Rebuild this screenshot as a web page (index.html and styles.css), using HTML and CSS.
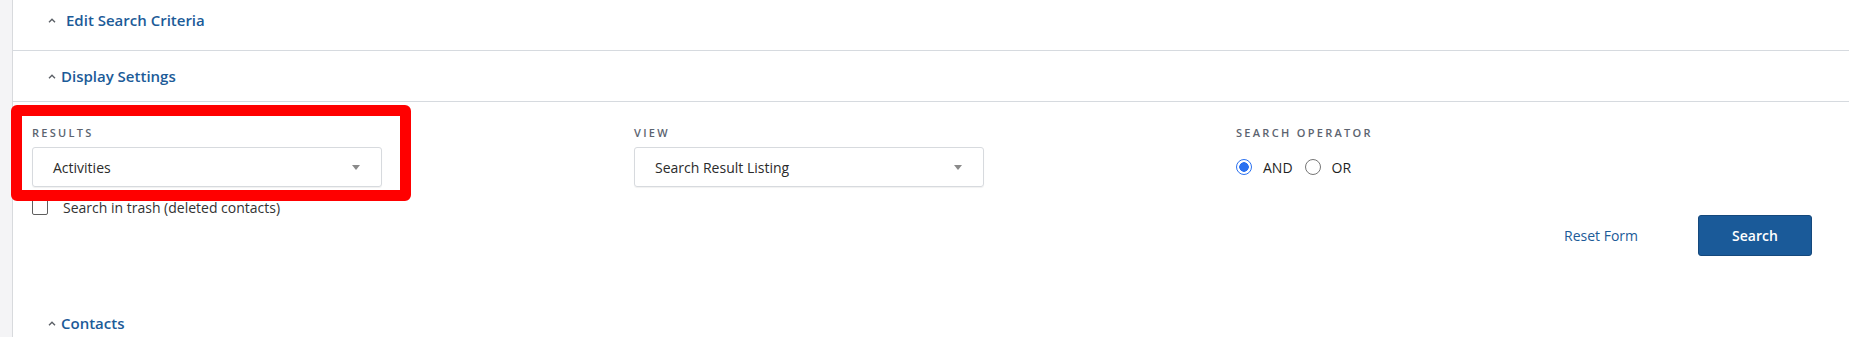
FILE: index.html
```html
<!DOCTYPE html>
<html lang="en">
<head>
    <meta charset="UTF-8">
    <title>Advanced Search</title>
    <link rel="stylesheet" href="styles.css">
</head>
<body>
    <div class="page">
        <div class="panel">
            <div class="section-head first">
                <svg class="caret" width="8" height="5" viewBox="0 0 8 5"><path d="M1 4.2 L4 1.2 L7 4.2" fill="none" stroke="#5a5f66" stroke-width="1.4"/></svg>
                <a class="section-title wide" href="#">Edit Search Criteria</a>
            </div>
            <div class="section-head">
                <svg class="caret" width="8" height="5" viewBox="0 0 8 5"><path d="M1 4.2 L4 1.2 L7 4.2" fill="none" stroke="#5a5f66" stroke-width="1.4"/></svg>
                <a class="section-title" href="#">Display Settings</a>
            </div>

            <div class="display-body">
                <div class="highlight"></div>
                <div class="fields">
                    <div class="field">
                        <label class="field-label">Results</label>
                        <div class="select">
                            <span>Activities</span>
                            <span class="arrow"></span>
                        </div>
                        <label class="check-row">
                            <input type="checkbox" class="check">
                            <span>Search in trash (deleted contacts)</span>
                        </label>
                    </div>
                    <div class="field">
                        <label class="field-label">View</label>
                        <div class="select">
                            <span>Search Result Listing</span>
                            <span class="arrow"></span>
                        </div>
                    </div>
                    <div class="field">
                        <label class="field-label">Search Operator</label>
                        <div class="radios">
                            <label class="radio-opt"><input type="radio" name="op" checked><span>AND</span></label>
                            <label class="radio-opt"><input type="radio" name="op"><span>OR</span></label>
                        </div>
                    </div>
                </div>
                <div class="actions">
                    <a class="reset-link" href="#">Reset Form</a>
                    <button class="search-btn">Search</button>
                </div>
            </div>

            <div class="section-head last">
                <svg class="caret" width="8" height="5" viewBox="0 0 8 5"><path d="M1 4.2 L4 1.2 L7 4.2" fill="none" stroke="#5a5f66" stroke-width="1.4"/></svg>
                <a class="section-title" href="#">Contacts</a>
            </div>
        </div>
    </div>
</body>
</html>
```

FILE: styles.css
```css
* {
    margin: 0;
    padding: 0;
    box-sizing: border-box;
}

body {
    font-family: "Open Sans", "Noto Sans", sans-serif;
    color: #333;
    background: #fff;
    overflow: hidden;
}

.page {
    background: #f4f4f6;
    padding-left: 12px;
    min-height: 337px;
}

.panel {
    background: #fff;
    border-left: 1px solid #d8dadd;
    min-height: 337px;
}

/* collapsible section headers */
.section-head {
    display: flex;
    align-items: center;
    height: 51px;
    padding-left: 35px;
    border-bottom: 1px solid #d6dadf;
}

.section-head.first {
    height: 51px;
    padding-bottom: 10px;
}

.section-head.last {
    border-bottom: none;
    height: 20px;
    margin-top: 57px;
}

.caret {
    margin-right: 5px;
    margin-top: 1px;
}

.section-title {
    color: #1c5b98;
    font-size: 15px;
    font-weight: 600;
    text-decoration: none;
    line-height: 20px;
}

.section-title.wide {
    margin-left: 5px;
}

/* display settings */
.display-body {
    position: relative;
    padding: 23px 37px 0 19px;
}

.highlight {
    position: absolute;
    left: -2px;
    top: 3px;
    width: 400px;
    height: 96px;
    border: 11px solid #ff0000;
    border-radius: 6px;
    z-index: 2;
    pointer-events: none;
}

.fields {
    display: grid;
    grid-template-columns: 602px 602px 1fr;
}

.field-label {
    display: block;
    font-size: 11px;
    font-weight: 600;
    letter-spacing: 2.3px;
    text-transform: uppercase;
    color: #5c6470;
    line-height: 16px;
    margin-bottom: 6px;
}

.select {
    width: 350px;
    height: 40px;
    display: flex;
    align-items: center;
    justify-content: space-between;
    padding: 0 21px 0 20px;
    border: 1px solid #d7dade;
    border-radius: 3px;
    box-shadow: 0 1px 1px rgba(0, 0, 0, 0.06);
    font-size: 14px;
    color: #2b2b2b;
}

.arrow {
    width: 0;
    height: 0;
    border-left: 4.5px solid transparent;
    border-right: 4.5px solid transparent;
    border-top: 5px solid #8a8a8a;
}

.check-row {
    display: flex;
    align-items: center;
    margin-top: 12px;
    height: 16px;
    font-size: 14px;
    color: #333;
}

.check {
    appearance: none;
    width: 16px;
    height: 16px;
    border: 1px solid #5f5f5f;
    border-radius: 2px;
    background: #fff;
    margin-right: 15px;
}

.radios {
    display: flex;
    align-items: center;
    height: 40px;
}

.radio-opt {
    display: flex;
    align-items: center;
    font-size: 14px;
    color: #1f1f1f;
    margin-right: 12px;
}

.radio-opt input {
    appearance: none;
    width: 16px;
    height: 16px;
    border: 1px solid #767676;
    border-radius: 50%;
    margin-right: 11px;
    background: #fff;
}

.radio-opt input:checked {
    border: 1.5px solid #2b71f0;
    background: radial-gradient(circle, #2b71f0 0, #2b71f0 4.5px, #fff 5px);
}

.actions {
    display: flex;
    justify-content: flex-end;
    align-items: center;
}

.reset-link {
    color: #1c5b98;
    font-size: 14px;
    text-decoration: none;
    margin-right: 60px;
}

.search-btn {
    width: 114px;
    height: 41px;
    background: #1a5a99;
    border: 1px solid #15487c;
    border-radius: 3px;
    color: #fff;
    font-family: inherit;
    font-size: 14px;
    font-weight: 600;
}
```
